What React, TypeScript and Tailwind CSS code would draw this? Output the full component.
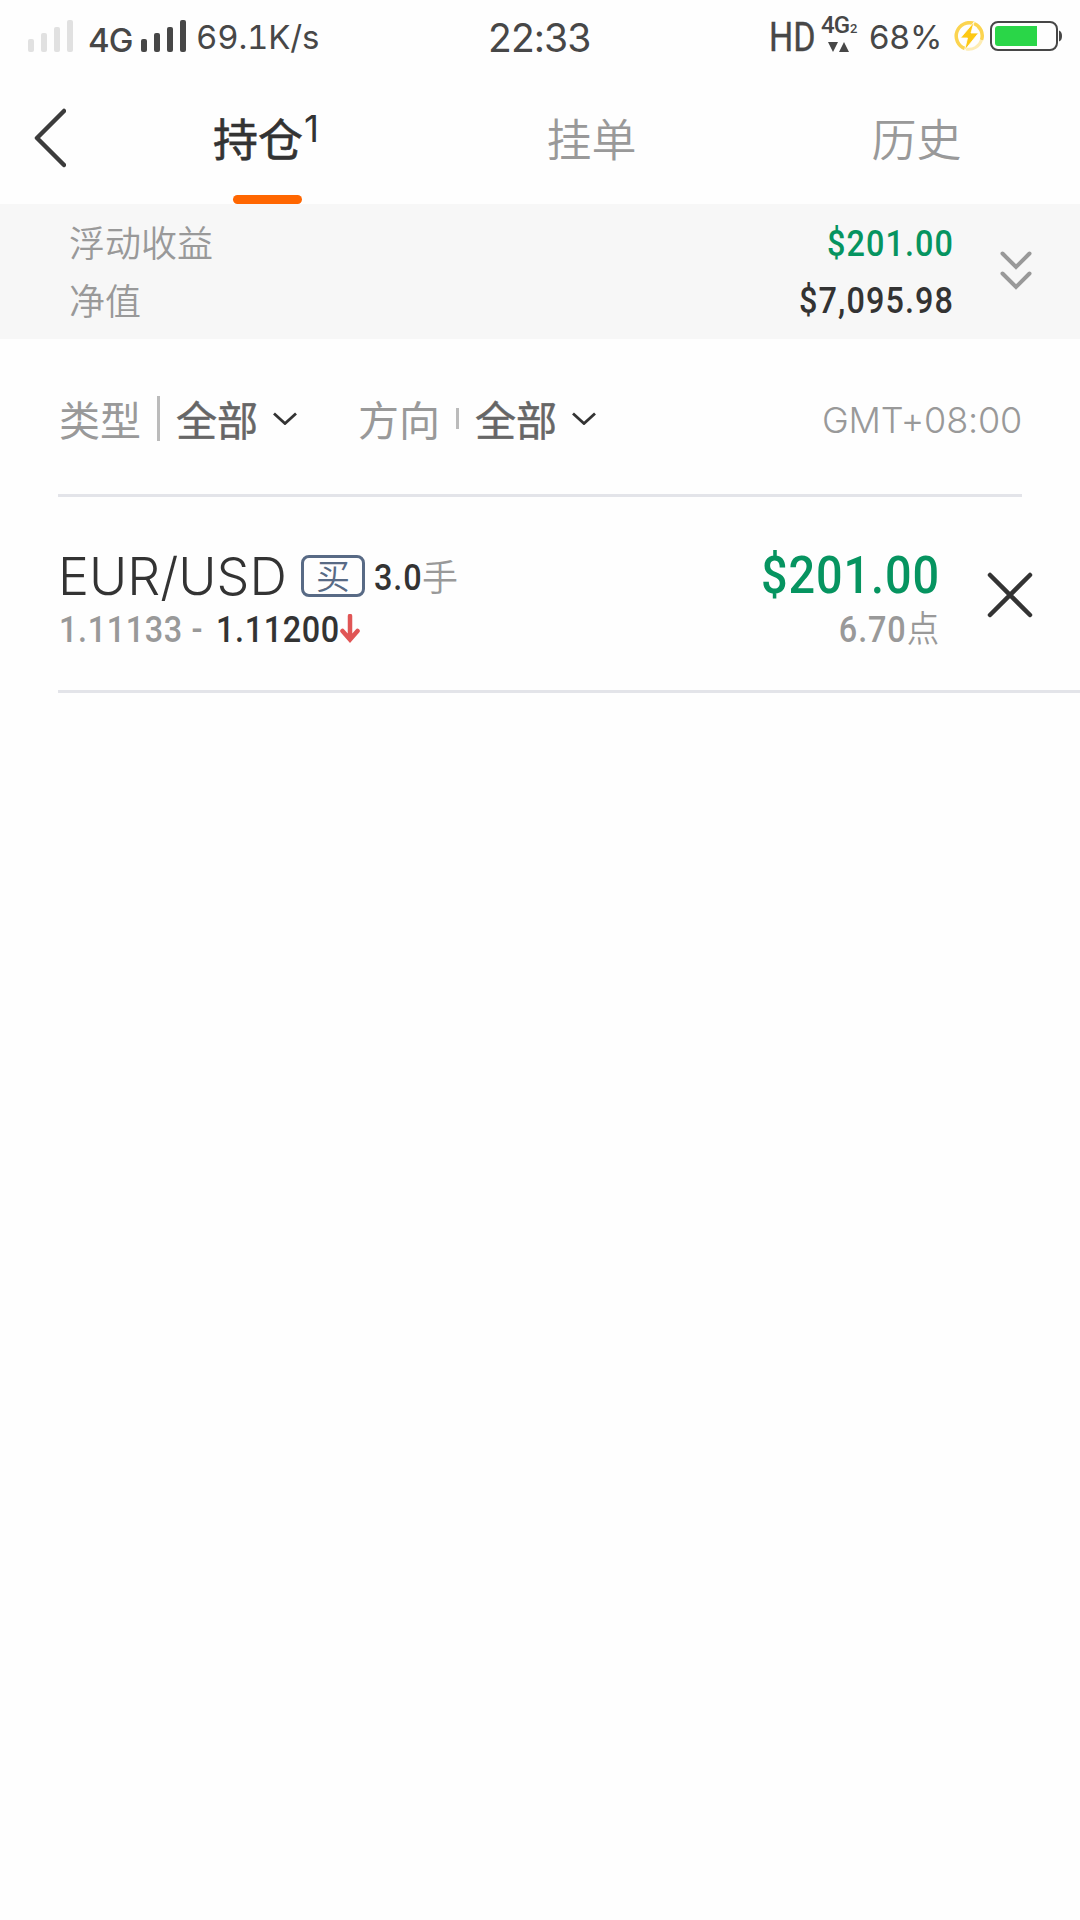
import clsx from 'clsx';

const cjk = "font-['Noto_Sans_CJK_SC',sans-serif]";
const latin = "font-['Inter','Noto_Sans_CJK_SC',sans-serif]";
const digits = "font-['Roboto','Noto_Sans_CJK_SC',sans-serif]";

const Signal = ({ className }: { className: string }) => (
  <svg viewBox="0 0 45 32" className={clsx('h-8 w-[45px] shrink-0 fill-current', className)}>
    <rect x="0" y="19" width="6" height="13" rx="2" />
    <rect x="13" y="13" width="6" height="19" rx="2" />
    <rect x="26" y="7" width="6" height="25" rx="2" />
    <rect x="39" y="0" width="6" height="32" rx="2" />
  </svg>
);

const Bolt = () => (
  <svg viewBox="0 0 30 30" className="h-[30px] w-[30px]" fill="none">
    <path d="M20 2.500A13.200 13.200 0 1 0 11 27.500" stroke="#fbd450" strokeWidth="3.500" />
    <path d="M20 2.500A13.200 13.200 0 0 1 27.500 19" stroke="#fbd450" strokeWidth="3.500" />
    <path d="M27.500 19A13.200 13.200 0 0 1 12 28" stroke="#fdecb4" strokeWidth="3" />
    <path d="M20 1 6.500 17h7L10.500 29.500 24.500 12h-7.500z" fill="#fdc813" stroke="#fefefe" strokeWidth="0.800" />
  </svg>
);

const Battery = () => (
  <svg viewBox="0 0 72 30" className="h-[30px] w-[72px]">
    <rect x="1" y="1" width="66" height="28" rx="7" fill="none" stroke="#474747" strokeWidth="2" />
    <path d="M8 5h39v20H8a3 3 0 0 1-3-3V8a3 3 0 0 1 3-3z" fill="#2ad648" />
    <path d="M69 9.500q3 1 3 5.500t-3 5.500z" fill="#474747" />
  </svg>
);

const StatusBar = () => (
  <div className={clsx('flex h-[75px] items-start whitespace-nowrap text-[#474747]', latin)}>
    <Signal className="mt-5 ml-7 text-[#e1e1e1]" />
    <span className="mt-5 ml-[15px] w-[52px] text-[33px] leading-10 font-medium tracking-[-1px]">4G</span>
    <Signal className="mt-5 ml-px" />
    <span className="mt-[17px] ml-[10px] w-[292px] text-[33px] leading-10 tracking-[-0.200px] tabular-nums">69.1K/s</span>
    <span className="mt-[18px] w-[281px] text-[39px] leading-10 tracking-[-0.900px]">22:33</span>
    <span className={clsx('mt-[18px] w-[52px] origin-left scale-x-[0.85] text-[40px] leading-10 [-webkit-text-stroke:0.400px]', digits)}>HD</span>
    <div className="mt-[13px] w-[48px]">
      <div className={clsx('flex items-baseline leading-6', digits)}>
        <span className="text-[24px] font-medium tracking-[-1px]">4G</span>
        <span className="ml-px text-[13px] font-medium">2</span>
      </div>
      <svg viewBox="0 0 21 10" className="mt-px ml-[7px] h-[10px] w-[21px] fill-current">
        <path d="M0 0h10L5 10zM11 10h10L16 0z" />
      </svg>
    </div>
    <span className="mt-[17px] w-[85px] text-[33px] leading-10">68%</span>
    <div className="mt-[21px] flex gap-[6px]">
      <Bolt />
      <Battery />
    </div>
  </div>
);

const tabs = [
  { label: '持仓', count: 1, active: true },
  { label: '挂单', active: false },
  { label: '历史', active: false },
];

const TabBar = () => (
  <div className="flex h-[129px]">
    <button className="flex w-[105px] items-start pt-[33px] pl-8">
      <svg viewBox="0 0 34 60" className="h-[60px] w-[34px]" fill="none" stroke="#3c3c3c" strokeWidth="4.500" strokeLinecap="round" strokeLinejoin="round">
        <path d="M32 3 5 30l27 27" />
      </svg>
    </button>
    {tabs.map((tab) => (
      <div key={tab.label} className="flex w-[325px] flex-col items-center justify-between">
        <div className={clsx('flex pt-[30px] text-[45px] leading-[66px]', cjk, tab.active ? 'font-normal text-[#333] [-webkit-text-stroke:0.600px]' : 'pr-[2px] font-[350] text-[#999]')}>
          {tab.label}
          {tab.count && <sup className={clsx('top-0 ml-px h-10 w-[18px] text-[37px] leading-[48px] [-webkit-text-stroke:0]', latin)}>{tab.count}</sup>}
        </div>
        {tab.active && <div className="h-[9px] w-[69px] rounded-full bg-[#ff6600]" />}
      </div>
    ))}
  </div>
);

const Summary = () => (
  <div className="flex h-[135px] bg-[#f7f7f7] pt-2">
    <div className={clsx('w-[400px] pl-[69px] text-[36px] leading-[58px] font-[350] text-[#999]', cjk)}>
      <p>浮动收益</p>
      <p>净值</p>
    </div>
    <div className={clsx('w-[554px] origin-right scale-x-90 pt-1 text-right text-[36px] leading-[57px] font-medium tracking-[1.200px] text-[#333]', digits)}>
      <p className="text-[#069460]">$201.00</p>
      <p>$7,095.98</p>
    </div>
    <svg viewBox="0 0 32 40" className="mt-[38px] ml-[46px] h-10 w-8" fill="none" stroke="#999" strokeWidth="4" strokeLinecap="round">
      <path d="M2.500 3.500 16 17 29.500 3.500M2.500 23.500 16 37l13.500-13.500" />
    </svg>
  </div>
);

const Caret = () => (
  <svg viewBox="0 0 24 13" className="h-[13px] w-6" fill="none" stroke="#333" strokeWidth="2.800">
    <path d="M1 1.500 12 11.500 23 1.500" />
  </svg>
);

const Filter = ({ label, tall }: { label: string; tall?: boolean }) => (
  <div className="flex items-center">
    <span className="w-[98px] text-[#999]">{label}</span>
    <span className={clsx('w-[3px] bg-[#bbb]', tall ? 'h-[45px]' : 'h-[21px]')} />
    <span className="ml-4 w-[97px] text-[#666] [-webkit-text-stroke:0.500px]">全部</span>
    <Caret />
  </div>
);

const Filters = () => (
  <div className={clsx('ml-[58px] flex h-[158px] w-[964px] items-center border-b-[3px] border-[#e3e4e9] pt-[3px] text-[41px] leading-[60px]', cjk)}>
    <div className="ml-px w-[299px]"><Filter label="类型" tall /></div>
    <Filter label="方向" />
    <span className={clsx('ml-auto pt-1 text-[36px] font-light tracking-[-0.200px] text-[#999]', latin)}>GMT+08:00</span>
  </div>
);

const PositionRow = () => (
  <div className="ml-[58px] flex h-[196px] items-start border-b-[3px] border-[#e3e4e9] whitespace-nowrap">
    <div className="w-[500px] pt-[49px]">
      <div className="flex h-[60px] items-center">
        <span className={clsx('w-[243px] pt-[2px] text-[52px] leading-[60px] font-light text-[#333]', latin)}>EUR/USD</span>
        <span className={clsx('flex h-[42px] w-16 items-center justify-center rounded-lg border-[3px] border-[#586a85] pb-[2px] text-[34px] leading-none font-[350] text-[#586a85]', cjk)}>买</span>
        <span className={clsx('ml-[9px] w-12 origin-left scale-x-90 pt-[3px] text-[36px] leading-[60px] font-medium tracking-[1px] text-[#333]', digits)}>3.0</span>
        <span className={clsx('pb-[3px] text-[36px] leading-[60px] font-[350] text-[#999]', cjk)}>手</span>
      </div>
      <div className={clsx('flex h-12 items-center text-[36px] leading-[48px] font-medium tracking-[0.700px]', digits)}>
        <span className="ml-px w-[157px] origin-left scale-x-90 text-[#999]">1.11133 - </span>
        <span className="w-[124px] origin-left scale-x-90 text-[#333]">1.11200</span>
        <svg viewBox="0 0 20 29" className="mb-1 h-[29px] w-5" fill="none" stroke="#e05555" strokeWidth="4.500" strokeLinecap="round">
          <path d="M10 2v23M2.500 17 10 25.500 17.500 17" />
        </svg>
      </div>
    </div>
    <div className={clsx('w-[382px] origin-right scale-x-90 pt-[49px] text-right font-medium tracking-[1px]', digits)}>
      <p className="text-[52px] leading-[60px] text-[#069460]">$201.00</p>
      <p className="text-[36px] leading-[48px] text-[#999]">6.70<span className="font-[350]">点</span></p>
    </div>
    <svg viewBox="0 0 46 46" className="mt-[75px] ml-[47px] h-[46px] w-[46px]" fill="none" stroke="#333" strokeWidth="4.500" strokeLinecap="round">
      <path d="M3 3l40 40M43 3 3 43" />
    </svg>
  </div>
);

export default function App() {
  return (
    <div className="h-[1920px] w-[1080px] overflow-hidden bg-[#fefefe]">
      <StatusBar />
      <TabBar />
      <Summary />
      <Filters />
      <PositionRow />
    </div>
  );
}
